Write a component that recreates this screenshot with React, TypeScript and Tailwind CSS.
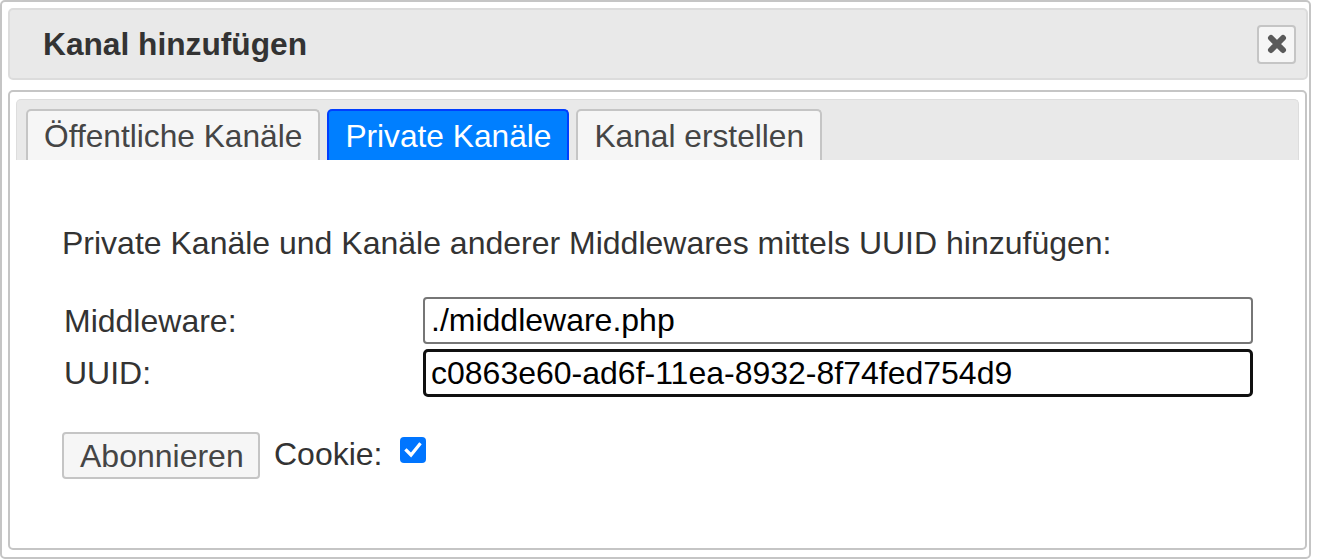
import { useState } from "react";

const font = { fontFamily: '"Liberation Sans", Arial, Helvetica, sans-serif' };

function CloseIcon() {
  return (
    <svg width="22" height="20" viewBox="0 0 22 20" className="block">
      <path
        d="M5 4 L17 16 M17 4 L5 16"
        stroke="#5a5a5a"
        strokeWidth="6"
        strokeLinecap="round"
        fill="none"
      />
    </svg>
  );
}

function Checkbox({ checked, onChange }: { checked: boolean; onChange: () => void }) {
  return (
    <button
      type="button"
      onClick={onChange}
      className={
        checked
          ? "w-[26px] h-[26px] rounded-[4px] bg-[#0075ff] flex items-center justify-center"
          : "w-[26px] h-[26px] rounded-[4px] bg-white border-2 border-[#767676]"
      }
    >
      {checked && (
        <svg width="20" height="20" viewBox="0 0 20 20">
          <path
            d="M3.5 10.5 L8 15 L16.5 4.5"
            stroke="white"
            strokeWidth="3.2"
            fill="none"
            strokeLinecap="square"
          />
        </svg>
      )}
    </button>
  );
}

function App() {
  const [tab, setTab] = useState("private");
  const [cookie, setCookie] = useState(true);

  const tabs = [
    { id: "public", name: "Öffentliche Kanäle" },
    { id: "private", name: "Private Kanäle" },
    { id: "create", name: "Kanal erstellen" },
  ];

  return (
    <div style={font} className="w-[1317px] h-[560px] bg-white text-[32px] leading-[36px]">
      <div className="w-[1311px] h-[559px] border-2 border-[#c5c5c5] rounded-[5px] bg-white pt-[6px] pl-[6px] pr-[1px] flex flex-col">
        {/* title bar */}
        <div className="h-[72px] w-[1300px] border-2 border-[#dcdcdc] rounded-[5px] bg-[#e9e9e9] flex items-center justify-between pl-[33px] pr-[10px]">
          <span className="font-bold text-[#333333] text-[31.7px]">Kanal hinzufügen</span>
          <button className="w-[39px] h-[39px] rounded-[4px] border-2 border-[#c5c5c5] bg-[#f6f6f6] flex items-center justify-center">
            <CloseIcon />
          </button>
        </div>

        {/* tabs panel */}
        <div className="mt-[10px] h-[460px] w-[1299px] border-2 border-[#c5c5c5] rounded-[5px] pt-[7px] px-[6px]">
          <div className="border border-b-0 border-[#dddddd] rounded-t-[5px] bg-[#e9e9e9] pt-[9px] pl-[9px] flex gap-[7px] text-[31.7px]">
            {tabs.map((t) =>
              t.id === tab ? (
                <button
                  key={t.id}
                  onClick={() => setTab(t.id)}
                  className="h-[51px] px-[16px] border-2 border-b-0 border-[#003eff] rounded-t-[5px] bg-[#007fff] text-white"
                >
                  {t.name}
                </button>
              ) : (
                <button
                  key={t.id}
                  onClick={() => setTab(t.id)}
                  className="h-[51px] px-[16px] border-2 border-b-0 border-[#c5c5c5] rounded-t-[5px] bg-[#f6f6f6] text-[#454545]"
                >
                  {t.name}
                </button>
              )
            )}
          </div>

          <div className="pl-[46px] pt-[65px] text-[#333333]">
            <p>Private Kanäle und Kanäle anderer Middlewares mittels UUID hinzufügen:</p>

            <div className="mt-[36px] grid grid-cols-[361px_830px] gap-y-[5px]">
              <label className="pl-[2px] self-center">Middleware:</label>
              <input
                defaultValue="./middleware.php"
                className="h-[47px] border-2 border-[#767676] rounded-[4px] px-[6px] text-black outline-none"
              />
              <label className="pl-[2px] self-center">UUID:</label>
              <input
                defaultValue="c0863e60-ad6f-11ea-8932-8f74fed754d9"
                className="h-[48px] border-[3px] border-[#101010] rounded-[5px] px-[5px] text-black outline-none"
              />
            </div>

            <div className="mt-[35px] flex items-center">
              <button className="w-[198px] h-[47px] border-2 border-[#c5c5c5] rounded-[4px] bg-[#f6f6f6] text-[#454545] px-[16px]">
                Abonnieren
              </button>
              <span className="ml-[14px] mb-[3px]">Cookie:</span>
              <span className="ml-[17px] mb-[12px] flex">
                <Checkbox checked={cookie} onChange={() => setCookie(!cookie)} />
              </span>
            </div>
          </div>
        </div>
      </div>
    </div>
  );
}

export default App;
